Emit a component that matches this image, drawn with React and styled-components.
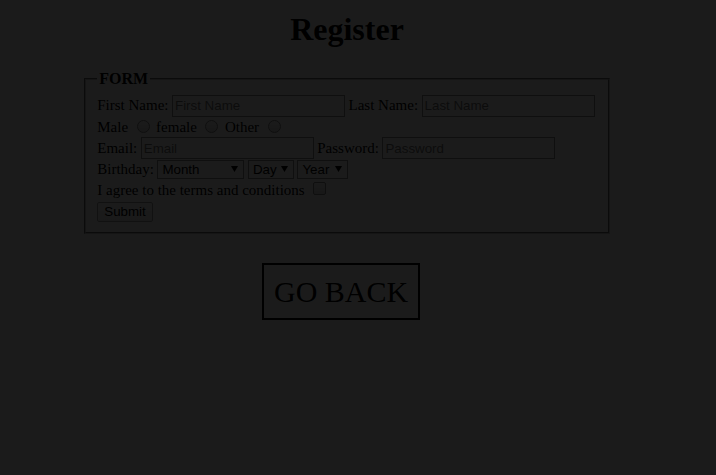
import React from 'react';
import styled, { createGlobalStyle } from 'styled-components';

const Global = createGlobalStyle`
  html, body { margin: 0; padding: 0; background: #fff; }
  body { font-family: "Liberation Serif", "Times New Roman", serif; color: #000; }
`;

const Page = styled.div`
  padding: 8px 0 0 82px;
`;

const Main = styled.main`
  width: 530px;
`;

const Title = styled.h1`
  margin: 3px 0 0;
  font-size: 32px;
  line-height: 37px;
  font-weight: bold;
  text-align: center;
`;

const Form = styled.form`
  margin-top: 21.5px;
`;

const Fieldset = styled.fieldset`
  margin: 0 2px;
  padding: 7.9px 11.25px 9.4px;
  border: 2px groove rgb(192, 192, 192);
  font-size: 15px;
`;

const Legend = styled.legend`
  padding: 0 2px;
  font-weight: bold;
  font-size: 16px;
`;

const Row = styled.div`
  display: flex;
  align-items: center;
  gap: 3.5px;
  height: 21.2px;
  white-space: nowrap;
`;

const Label = styled.span`
  line-height: normal;
`;

const TextInput = styled.input`
  box-sizing: border-box;
  width: 173px;
  height: 22px;
  margin: 0;
  padding: 1px 2px;
  border: 1px solid #8f8f8f;
  background: #fff;
  font-family: "Liberation Sans", Arial, sans-serif;
  font-size: 13.333px;
  &::placeholder { color: #757575; }
`;

const Radio = styled.input.attrs({ type: 'radio' })`
  appearance: none;
  box-sizing: border-box;
  width: 13px;
  height: 13px;
  margin: 0 3px 2px 5px;
  border: 1px solid #8a8a8a;
  border-radius: 50%;
  background: linear-gradient(#fafafa, #d8d8d8);
`;

const Checkbox = styled.input.attrs({ type: 'checkbox' })`
  appearance: none;
  box-sizing: border-box;
  width: 13px;
  height: 13px;
  margin: 0 3px 4px 5px;
  border: 1px solid #8a8a8a;
  border-radius: 2px;
  background: linear-gradient(#fafafa, #dcdcdc);
`;

const SelectWrap = styled.span`
  position: relative;
  display: inline-flex;
`;

const Select = styled.select`
  appearance: none;
  box-sizing: border-box;
  width: ${(p) => p.$w}px;
  height: 19px;
  margin: 0;
  padding: 0 0 0 4px;
  border: 1px solid #8f8f8f;
  border-radius: 0;
  background: #fafafa;
  color: #000;
  font-family: "Liberation Sans", Arial, sans-serif;
  font-size: 13.333px;
`;

const Arrow = styled.svg`
  position: absolute;
  right: 6px;
  top: 6px;
  width: 7px;
  height: 6px;
  pointer-events: none;
`;

const Submit = styled.button`
  box-sizing: border-box;
  height: 20px;
  margin: 0;
  padding: 0 6px;
  border: 1px solid #a0a0a0;
  border-radius: 2px;
  background: linear-gradient(#ffffff, #ececec);
  color: #000;
  font-family: "Liberation Sans", Arial, sans-serif;
  font-size: 13.333px;
`;

const GoBackRow = styled.div`
  display: flex;
  padding-left: 180px;
  margin-top: 29px;
`;

const GoBack = styled.a`
  display: block;
  padding: 10px;
  border: 2px solid #000;
  font-size: 30px;
  line-height: 33px;
  color: #000;
  text-decoration: none;
`;

const Dim = styled.div`
  position: fixed;
  inset: 0;
  background: rgba(0, 0, 0, 0.894);
  pointer-events: none;
`;

const months = ['January', 'February', 'March', 'April', 'May', 'June', 'July', 'August', 'September', 'October', 'November', 'December'];
const days = Array.from({ length: 31 }, (_, i) => i + 1);
const years = Array.from({ length: 30 }, (_, i) => 2000 - i);

function DropDown({ width, placeholder, options }) {
  return (
    <SelectWrap>
      <Select $w={width} defaultValue="">
        <option value="">{placeholder}</option>
        {options.map((o) => (
          <option key={o}>{o}</option>
        ))}
      </Select>
      <Arrow viewBox="0 0 7 6" aria-hidden="true">
        <path d="M0 0 H7 L3.5 6 Z" fill="#000" />
      </Arrow>
    </SelectWrap>
  );
}

export default function App() {
  return (
    <>
      <Global />
      <Page>
        <Main>
          <Title>Register</Title>
          <Form onSubmit={(e) => e.preventDefault()}>
            <Fieldset>
              <Legend>FORM</Legend>
              <Row>
                <Label>First Name:</Label>
                <TextInput type="text" placeholder="First Name" />
                <Label>Last Name:</Label>
                <TextInput type="text" placeholder="Last Name" />
              </Row>
              <Row>
                <Label>Male</Label>
                <Radio name="gender" />
                <Label>female</Label>
                <Radio name="gender" />
                <Label>Other</Label>
                <Radio name="gender" />
              </Row>
              <Row>
                <Label>Email:</Label>
                <TextInput type="email" placeholder="Email" />
                <Label>Password:</Label>
                <TextInput type="password" placeholder="Password" />
              </Row>
              <Row>
                <Label>Birthday:</Label>
                <DropDown width={87} placeholder="Month" options={months} />
                <DropDown width={46} placeholder="Day" options={days} />
                <DropDown width={51} placeholder="Year" options={years} />
              </Row>
              <Row>
                <Label>I agree to the terms and conditions</Label>
                <Checkbox />
              </Row>
              <Row>
                <Submit type="submit">Submit</Submit>
              </Row>
            </Fieldset>
          </Form>
          <GoBackRow>
            <GoBack href="#">GO BACK</GoBack>
          </GoBackRow>
        </Main>
      </Page>
      <Dim />
    </>
  );
}
